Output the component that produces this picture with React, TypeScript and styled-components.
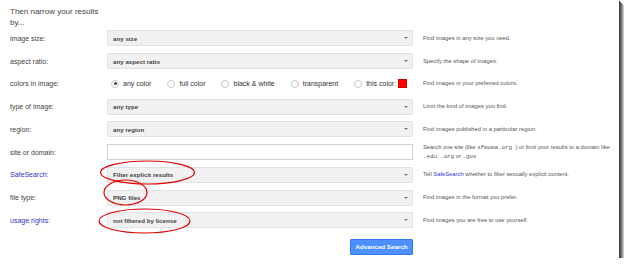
import React from "react";
import styled, { createGlobalStyle } from "styled-components";

const Global = createGlobalStyle`
  html, body { margin: 0; padding: 0; background: #ffffff; }
  body { font-family: "Liberation Sans", Arial, sans-serif; }
`;

const Frame = styled.div`
  position: relative;
  width: 619px;
  height: 258px;
  background: #fff;
  box-shadow: 1px 1px 0 #444, 2px 2px 0 #555, 3px 3px 0 #777, 4px 4px 0 #999, 5px 5px 1px #ccc;
  box-sizing: border-box;
  padding: 7px 0 0 10px;
  overflow: visible;
`;

const Heading = styled.div`
  width: 97px;
  font-size: 8px;
  line-height: 10.5px;
  color: #444;
  height: 20px;
`;

const Form = styled.div`
  display: grid;
  grid-template-columns: 97px 306px 1fr;
  grid-auto-rows: 22.75px;
  align-items: center;
`;

const Label = styled.div<{ $link?: boolean }>`
  font-size: 7px;
  color: ${(p) => (p.$link ? "#3333cc" : "#444")};
`;

const Select = styled.div`
  position: relative;
  height: 16px;
  box-sizing: border-box;
  background: #f1f1f1;
  border: 1px solid #e2e2e2;
  border-radius: 1px;
  display: flex;
  align-items: center;
  padding-left: 5px;
  font-size: 6.2px;
  font-weight: bold;
  color: #444;
`;

const Arrow = styled.span`
  position: absolute;
  right: 4px;
  top: 6px;
  width: 0;
  height: 0;
  border-left: 2px solid transparent;
  border-right: 2px solid transparent;
  border-top: 2.5px solid #777;
`;

const TextInput = styled.div`
  height: 16px;
  box-sizing: border-box;
  background: #fff;
  border: 1px solid #d0d0d0;
`;

const Desc = styled.div`
  padding-left: 10px;
  font-size: 5.8px;
  line-height: 9px;
  color: #555;
  white-space: nowrap;
`;

const Mono = styled.span`
  font-family: "Liberation Mono", monospace;
  color: #555;
`;

const Link = styled.span`
  color: #3333cc;
`;

const Radios = styled.div`
  display: flex;
  align-items: center;
  gap: 16px;
  padding-left: 4px;
`;

const RadioItem = styled.div`
  display: flex;
  align-items: center;
  gap: 4px;
  font-size: 7px;
  color: #333;
`;

const RadioCircle = styled.span<{ $on?: boolean }>`
  width: 8px;
  height: 8px;
  box-sizing: border-box;
  border-radius: 50%;
  border: 1px solid #c8c8c8;
  background: #fff;
  display: flex;
  align-items: center;
  justify-content: center;
  &::after {
    content: "";
    display: ${(p) => (p.$on ? "block" : "none")};
    width: 3px;
    height: 3px;
    border-radius: 50%;
    background: #444;
  }
`;

const Swatch = styled.span`
  width: 9px;
  height: 9px;
  background: #ff0000;
  border: 1px solid #cc0000;
  box-sizing: border-box;
  margin-left: -2px;
`;

const ButtonCell = styled.div`
  grid-column: 2;
  display: flex;
  justify-content: flex-end;
  align-self: end;
`;

const Button = styled.div`
  width: 63px;
  height: 16px;
  box-sizing: border-box;
  background: #4d90fe;
  border: 1px solid #3079ed;
  border-radius: 1px;
  color: #fff;
  font-size: 6.2px;
  font-weight: bold;
  display: flex;
  align-items: center;
  justify-content: center;
`;

const Marks = styled.svg`
  position: absolute;
  left: 0;
  top: 0;
  pointer-events: none;
`;

const Sel = ({ children }: { children: React.ReactNode }) => (
  <Select>
    {children}
    <Arrow />
  </Select>
);

export default function App() {
  return (
    <>
      <Global />
      <Frame>
        <Heading>Then narrow your results by...</Heading>
        <Form>
          <Label>image size:</Label>
          <Sel>any size</Sel>
          <Desc>Find images in any size you need.</Desc>

          <Label>aspect ratio:</Label>
          <Sel>any aspect ratio</Sel>
          <Desc>Specify the shape of images.</Desc>

          <Label>colors in image:</Label>
          <Radios>
            <RadioItem>
              <RadioCircle $on />
              any color
            </RadioItem>
            <RadioItem>
              <RadioCircle />
              full color
            </RadioItem>
            <RadioItem>
              <RadioCircle />
              black &amp; white
            </RadioItem>
            <RadioItem>
              <RadioCircle />
              transparent
            </RadioItem>
            <RadioItem>
              <RadioCircle />
              this color:
              <Swatch />
            </RadioItem>
          </Radios>
          <Desc>Find images in your preferred colors.</Desc>

          <Label>type of image:</Label>
          <Sel>any type</Sel>
          <Desc>Limit the kind of images you find.</Desc>

          <Label>region:</Label>
          <Sel>any region</Sel>
          <Desc>Find images published in a particular region.</Desc>

          <Label>site or domain:</Label>
          <TextInput />
          <Desc>
            Search one site (like <Mono> sfmoma.org </Mono>) or limit your results to a domain like
            <br />
            <Mono>.edu</Mono>, <Mono>.org</Mono> or <Mono>.gov</Mono>
          </Desc>

          <Label $link>SafeSearch:</Label>
          <Sel>Filter explicit results</Sel>
          <Desc>
            Tell <Link>SafeSearch</Link> whether to filter sexually explicit content.
          </Desc>

          <Label>file type:</Label>
          <Sel>PNG files</Sel>
          <Desc>Find images in the format you prefer.</Desc>

          <Label $link>usage rights:</Label>
          <Sel>not filtered by license</Sel>
          <Desc>Find images you are free to use yourself.</Desc>

          <ButtonCell>
            <Button>Advanced Search</Button>
          </ButtonCell>
        </Form>
        <Marks width="619" height="258" viewBox="0 0 619 258">
          <g fill="none" stroke="#e00000" strokeWidth="1.2">
            <ellipse cx="147.5" cy="172.5" rx="47" ry="11.5" />
            <ellipse cx="125.5" cy="192.5" rx="21.5" ry="12.5" />
            <ellipse cx="144.5" cy="221" rx="45.5" ry="12" />
          </g>
        </Marks>
      </Frame>
    </>
  );
}
